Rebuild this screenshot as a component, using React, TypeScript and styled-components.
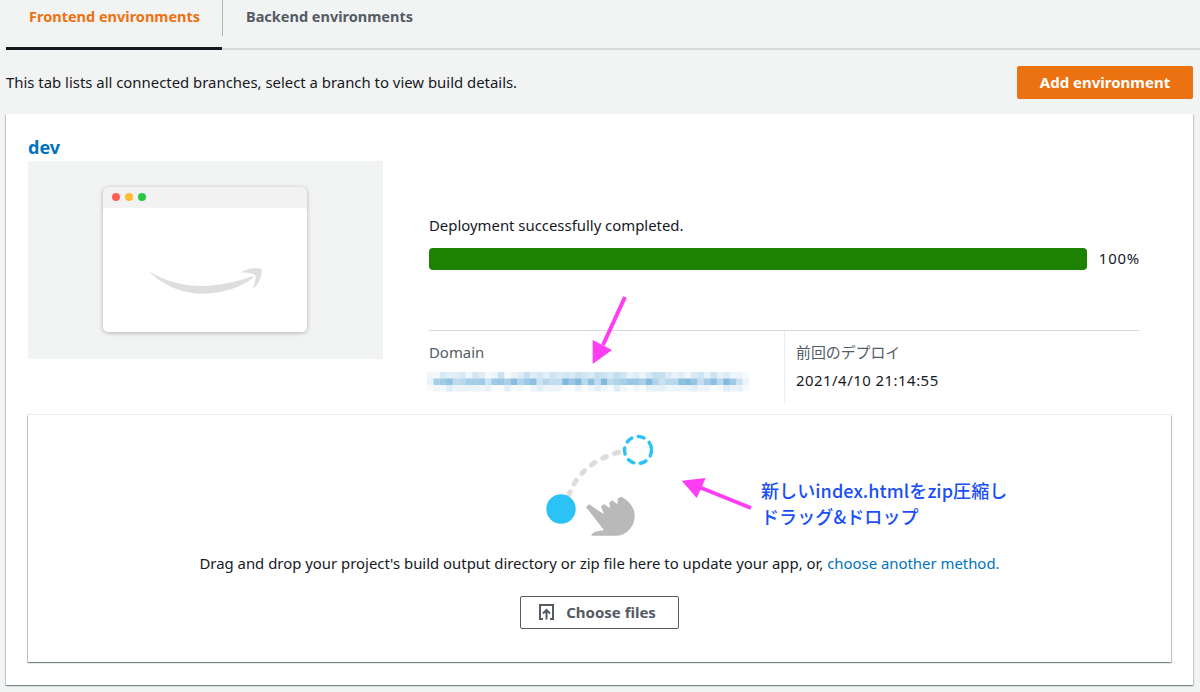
import React from 'react'
import styled, { createGlobalStyle } from 'styled-components'

const GlobalStyle = createGlobalStyle`
  html, body {
    margin: 0;
    padding: 0;
    background: #f2f3f3;
    font-family: "Noto Sans", "Noto Sans CJK JP", sans-serif;
    color: #16191f;
    font-size: 14.9px;
  }
  * {
    box-sizing: border-box;
  }
`

const Page = styled.div`
  position: relative;
  width: 1200px;
  height: 692px;
  padding: 0 7px 0 6px;
  overflow: hidden;
`

const Tabs = styled.div`
  display: flex;
  height: 50px;
  margin-right: -7px;
  border-bottom: 2px solid #d5dbdb;
`

const Tab = styled.div<{ active?: boolean }>`
  width: ${({ active }) => (active ? '216px' : 'auto')};
  height: 50px;
  padding: 7px 0 0 23px;
  font-size: 14.5px;
  font-weight: 700;
  line-height: 18px;
  white-space: nowrap;
  color: ${({ active }) => (active ? '#ec7211' : '#545b64')};
  border-bottom: ${({ active }) => (active ? '3px solid #16191f' : 'none')};
`

const TabDivider = styled.div`
  width: 1px;
  height: 36px;
  background: #aab7b8;
`

const Toolbar = styled.div`
  display: flex;
  align-items: center;
  justify-content: space-between;
  height: 33px;
  margin-top: 16px;
`

const Description = styled.div`
  padding-bottom: 2px;
  line-height: 20px;
`

const PrimaryButton = styled.button`
  width: 176px;
  height: 33px;
  padding: 0 0 2px;
  border: none;
  border-radius: 2px;
  background: #ec7211;
  color: #fff;
  font: 700 15px "Noto Sans", sans-serif;
`

const Card = styled.section`
  height: 571px;
  margin-top: 15px;
  padding: 20px 22px 0;
  background: #fff;
  box-shadow: 0 1px 1px 0 rgba(0, 28, 36, 0.3), 1px 1px 1px 0 rgba(0, 28, 36, 0.15), -1px 1px 1px 0 rgba(0, 28, 36, 0.15);
`

const BranchName = styled.h2`
  margin: 0;
  height: 27px;
  font-size: 18px;
  font-weight: 700;
  line-height: 26px;
  color: #0073bb;
`

const Summary = styled.div`
  display: flex;
  height: 242px;
`

const Thumbnail = styled.div`
  display: flex;
  justify-content: center;
  width: 355px;
  height: 198px;
  padding: 26px 1px 0 0;
  background: #f2f3f3;
`

const BrowserWindow = styled.div`
  width: 204px;
  height: 145px;
  border-radius: 5px;
  background: #f2f2f2;
  box-shadow: 0 1px 4px rgba(0, 0, 0, 0.28);
  overflow: hidden;
`

const BrowserBar = styled.div`
  display: flex;
  align-items: center;
  gap: 5px;
  height: 21px;
  padding: 0 0 1px 9px;
`

const Dot = styled.span<{ color: string }>`
  width: 8px;
  height: 8px;
  border-radius: 50%;
  background: ${({ color }) => color};
`

const BrowserBody = styled.div`
  display: flex;
  justify-content: center;
  height: 124px;
  padding-top: 59px;
  border-radius: 4px 4px 0 0;
  background: #fff;
`

const Info = styled.div`
  width: 711px;
  margin-left: 46px;
  padding-top: 54px;
`

const StatusText = styled.div`
  line-height: 20px;
`

const ProgressRow = styled.div`
  display: flex;
  align-items: center;
  gap: 12px;
  margin-top: 13px;
`

const ProgressTrack = styled.div`
  width: 658px;
  height: 22px;
  border-radius: 4px;
  background: #eaeded;
  overflow: hidden;
`

const ProgressFill = styled.div`
  height: 100%;
  background: #1d8102;
`

const ProgressValue = styled.span`
  padding-bottom: 2px;
  letter-spacing: 0.8px;
`

const Details = styled.div`
  display: grid;
  grid-template-columns: 355px 1fr;
  height: 73px;
  margin-top: 60px;
  border-top: 1px solid #d5dbdb;
`

const DetailCell = styled.div<{ divided?: boolean }>`
  padding: 11px 0 0 ${({ divided }) => (divided ? '11px' : '0')};
  border-left: ${({ divided }) => (divided ? '1px solid #eaeded' : 'none')};
`

const DetailLabel = styled.div`
  line-height: 20px;
  color: #545b64;
`

const DetailValue = styled.div`
  margin-top: 8px;
  line-height: 20px;
  letter-spacing: 0.5px;
`

const Mosaic = styled.svg`
  display: block;
  margin: 10px 0 0 -2px;
`

const DropZone = styled.div`
  display: flex;
  flex-direction: column;
  align-items: center;
  height: 247px;
  margin-top: 12px;
  padding-top: 15px;
  background: #fff;
  box-shadow: 0 1px 1px 0 rgba(0, 28, 36, 0.3), 1px 1px 1px 0 rgba(0, 28, 36, 0.15), -1px 1px 1px 0 rgba(0, 28, 36, 0.15), 0 0 0 1px #eaeded;
`

const DropText = styled.p`
  margin: 13px 0 0;
  line-height: 20px;
  white-space: nowrap;
`

const InlineLink = styled.a`
  color: #0073bb;
`

const SecondaryButton = styled.button`
  display: flex;
  align-items: center;
  justify-content: center;
  gap: 12px;
  width: 159px;
  height: 33px;
  margin-top: 23px;
  padding: 0 4px 2px 0;
  border: 1px solid #545b64;
  border-radius: 2px;
  background: #fff;
  color: #545b64;
  font: 700 15px "Noto Sans", sans-serif;
`

const Arrow = styled.svg<{ $left: number; $top: number }>`
  position: absolute;
  left: ${({ $left }) => $left}px;
  top: ${({ $top }) => $top}px;
`

const Note = styled.div`
  position: absolute;
  left: 761px;
  top: 477px;
  font-family: "Noto Sans CJK JP", sans-serif;
  font-size: 18px;
  font-weight: 500;
  line-height: 26px;
  letter-spacing: 0.1px;
  color: #1a4ff5;
`

const mosaicRows = [
  { y: 0, base: 0.04, spread: 0.2 },
  { y: 6.5, base: 0.2, spread: 0.32 },
  { y: 13, base: 0.01, spread: 0.12 },
]

// blurred out url, just blocks of blue
const mosaicCells = mosaicRows.flatMap((row, r) =>
  Array.from({ length: 50 }, (_, i) => {
    const noise = Math.abs(Math.sin((i + 1) * 12.9898 + r * 78.233) * 43758.5453) % 1
    const edge = i === 0 || i === 49 ? 0.3 : 1
    return { x: i * 6.44, y: row.y, opacity: (row.base + noise * row.spread) * edge }
  })
)

const SmileIcon = () => (
  <svg width="115" height="28" viewBox="385 410 345 82">
    <path
      fill="#dedede"
      d="M385 420C440 455 500 465 545 466C590 466 650 455 697 437C700 436 702 440 699 443C660 473 600 490 550 489C490 489 430 465 385 420Z"
    />
    <path
      fill="#dedede"
      d="M662 426C680 413 715 410 726 416C728 435 718 462 698 476C704 460 712 440 706 433C698 426 680 424 662 426Z"
    />
  </svg>
)

const DragIllustration = () => (
  <svg width="120" height="110" viewBox="0 0 120 110">
    <path
      d="M28.7 65.7Q40 32 83 21"
      fill="none"
      stroke="#dedcdc"
      strokeWidth="5"
      strokeLinecap="round"
      strokeDasharray="4 9"
    />
    <circle cx="98" cy="20" r="13.5" fill="none" stroke="#2bc3f5" strokeWidth="3.5" strokeLinecap="round" strokeDasharray="6 6.7" />
    <circle cx="21" cy="79" r="14.7" fill="#2bc3f5" />
    <g transform="translate(-10 -5) scale(0.3333)">
      <path
        fill="#b9b9b9"
        d="M168 246L177 238L222 268L213 245L222 237L240 250L238 232L247 226L262 238L264 220L274 215C300 228 314 250 314 272C314 305 290 330 262 332L184 332C186 322 200 318 222 316Z"
      />
    </g>
  </svg>
)

const UploadIcon = () => (
  <svg width="15" height="16" viewBox="0 0 15 16" fill="none" stroke="#545b64" strokeWidth="2">
    <path d="M4 15H1V1H14V15H11" />
    <path d="M7.5 15.5V6.5M4 9.5L7.5 6L11 9.5" />
  </svg>
)

export default function App() {
  return (
    <Page>
      <GlobalStyle />
      <Tabs>
        <Tab active>Frontend environments</Tab>
        <TabDivider />
        <Tab>Backend environments</Tab>
      </Tabs>

      <Toolbar>
        <Description>This tab lists all connected branches, select a branch to view build details.</Description>
        <PrimaryButton>Add environment</PrimaryButton>
      </Toolbar>

      <Card>
        <BranchName>dev</BranchName>
        <Summary>
          <Thumbnail>
            <BrowserWindow>
              <BrowserBar>
                <Dot color="#ff5f57" />
                <Dot color="#ffbd2e" />
                <Dot color="#28c940" />
              </BrowserBar>
              <BrowserBody>
                <SmileIcon />
              </BrowserBody>
            </BrowserWindow>
          </Thumbnail>
          <Info>
            <StatusText>Deployment successfully completed.</StatusText>
            <ProgressRow>
              <ProgressTrack>
                <ProgressFill />
              </ProgressTrack>
              <ProgressValue>100%</ProgressValue>
            </ProgressRow>
            <Details>
              <DetailCell>
                <DetailLabel>Domain</DetailLabel>
                <Mosaic width="325" height="20" viewBox="0 0 325 20">
                  {mosaicCells.map((c, i) => (
                    <rect key={i} x={c.x} y={c.y} width="6.44" height="6.5" fill="#0073bb" opacity={c.opacity} />
                  ))}
                </Mosaic>
              </DetailCell>
              <DetailCell divided>
                <DetailLabel>前回のデプロイ</DetailLabel>
                <DetailValue>2021/4/10 21:14:55</DetailValue>
              </DetailCell>
            </Details>
          </Info>
        </Summary>

        <DropZone>
          <DragIllustration />
          <DropText>
            Drag and drop your project's build output directory or zip file here to update your app, or,{' '}
            <InlineLink>choose another method.</InlineLink>
          </DropText>
          <SecondaryButton>
            <UploadIcon />
            Choose files
          </SecondaryButton>
        </DropZone>
      </Card>

      <Arrow $left={585} $top={290} width="50" height="80" viewBox="585 290 50 80">
        <path d="M625 297L603 345" stroke="#ff3df5" strokeWidth="4" fill="none" />
        <path d="M592.7 364L592.7 340L612 350Z" fill="#ff3df5" />
      </Arrow>
      <Arrow $left={675} $top={470} width="85" height="45" viewBox="675 470 85 45">
        <path d="M751 508L699 487" stroke="#ff3df5" strokeWidth="4" fill="none" />
        <path d="M681.7 480.7L705.7 478L696.7 498Z" fill="#ff3df5" />
      </Arrow>
      <Note>
        新しいindex.htmlをzip圧縮し
        <br />
        ドラッグ&amp;ドロップ
      </Note>
    </Page>
  )
}
